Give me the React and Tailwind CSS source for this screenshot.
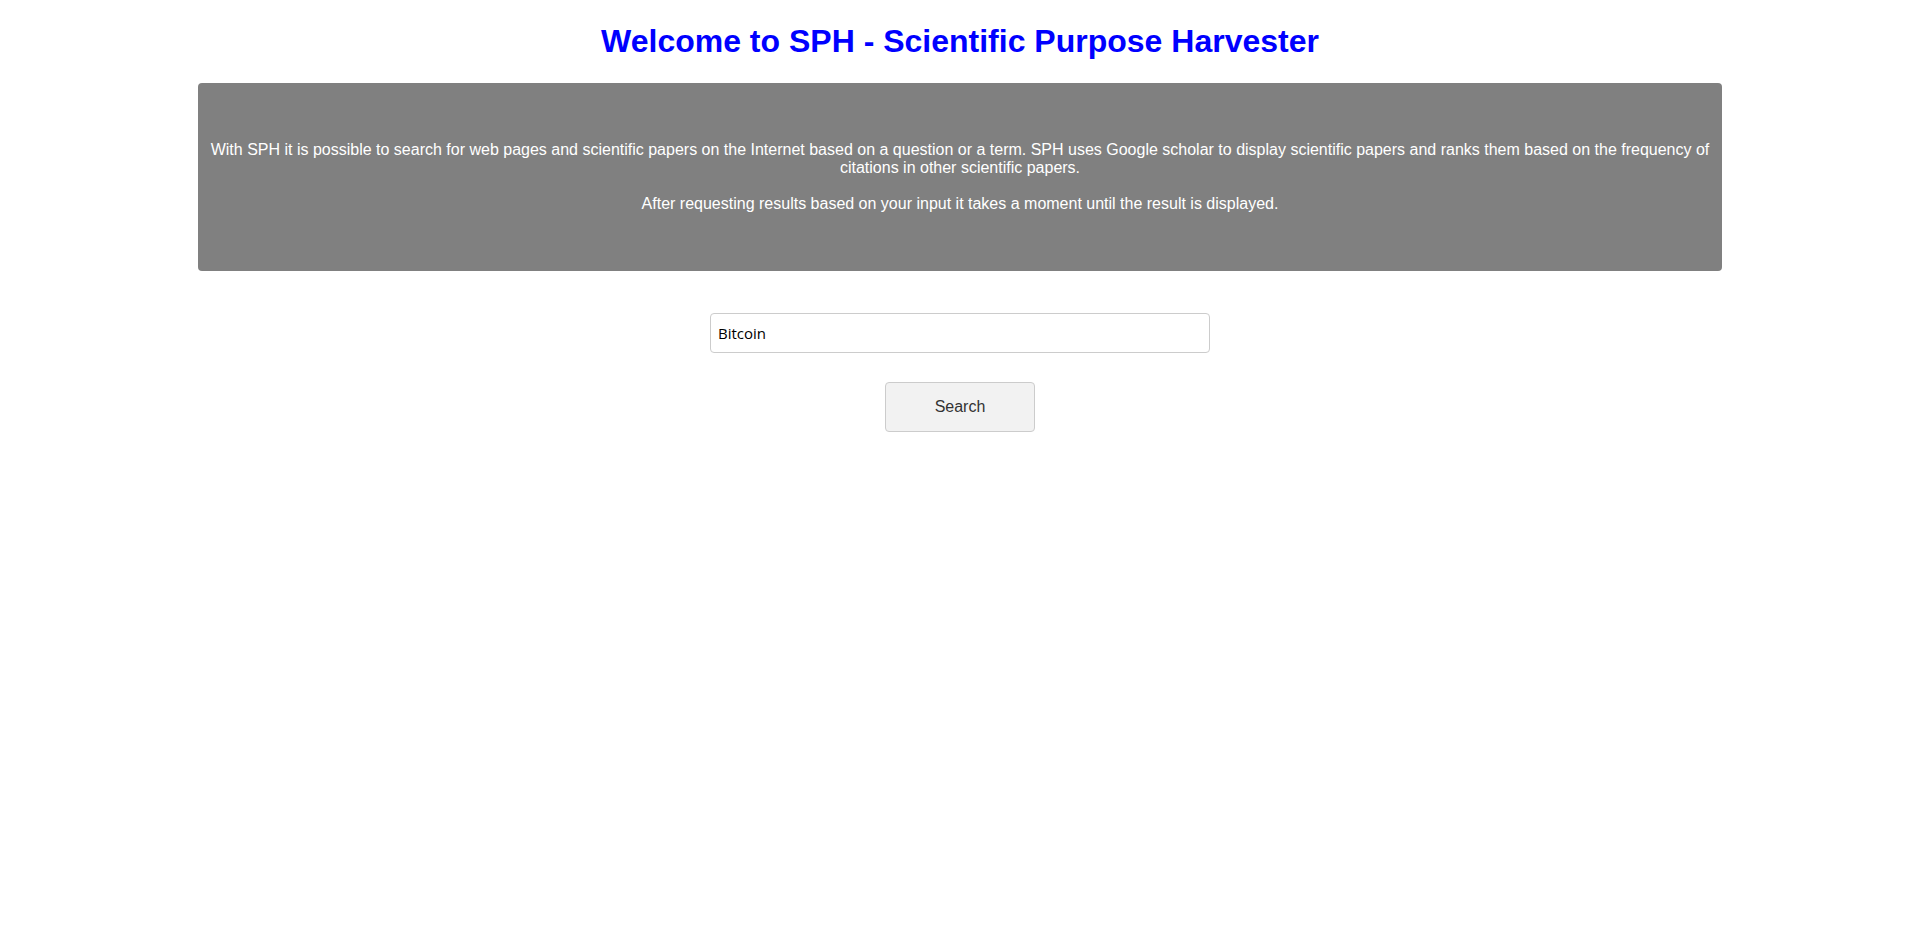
import React, { useState } from "react";

const App = () => {
  const [term, setTerm] = useState("Bitcoin");
  return (
    <div className="min-h-screen bg-white font-['Liberation_Sans',Arial,sans-serif]">
      <h1 className="text-center text-[32px] font-bold leading-[37px] text-[#0000ff] pt-[23px] pb-[23px]">
        Welcome to SPH - Scientific Purpose Harvester
      </h1>
      <div className="mx-auto w-[1524px] rounded bg-[#808080] px-[12px] py-[42px] text-center text-white text-[16px] leading-[18px]">
        <p className="mt-[16px]">
          With SPH it is possible to search for web pages and scientific papers on the Internet based on a question or a term. SPH uses Google scholar to display scientific papers and ranks them based on the frequency of citations in other scientific papers.
        </p>
        <p className="mt-[18px] mb-[16px]">
          After requesting results based on your input it takes a moment until the result is displayed.
        </p>
      </div>
      <div className="flex flex-col items-center pt-[42px]">
        <input
          type="text"
          value={term}
          onChange={(e) => setTerm(e.target.value)}
          className="w-[500px] h-[40px] rounded border border-[#cccccc] px-[7px] text-[15px] text-black outline-none font-['Open_Sans',sans-serif]"
        />
        <button className="mt-[29px] w-[150px] h-[50px] rounded border border-[#cccccc] bg-[#f2f2f2] text-[16px] text-[#333333]">
          Search
        </button>
      </div>
    </div>
  );
};

export default App;
